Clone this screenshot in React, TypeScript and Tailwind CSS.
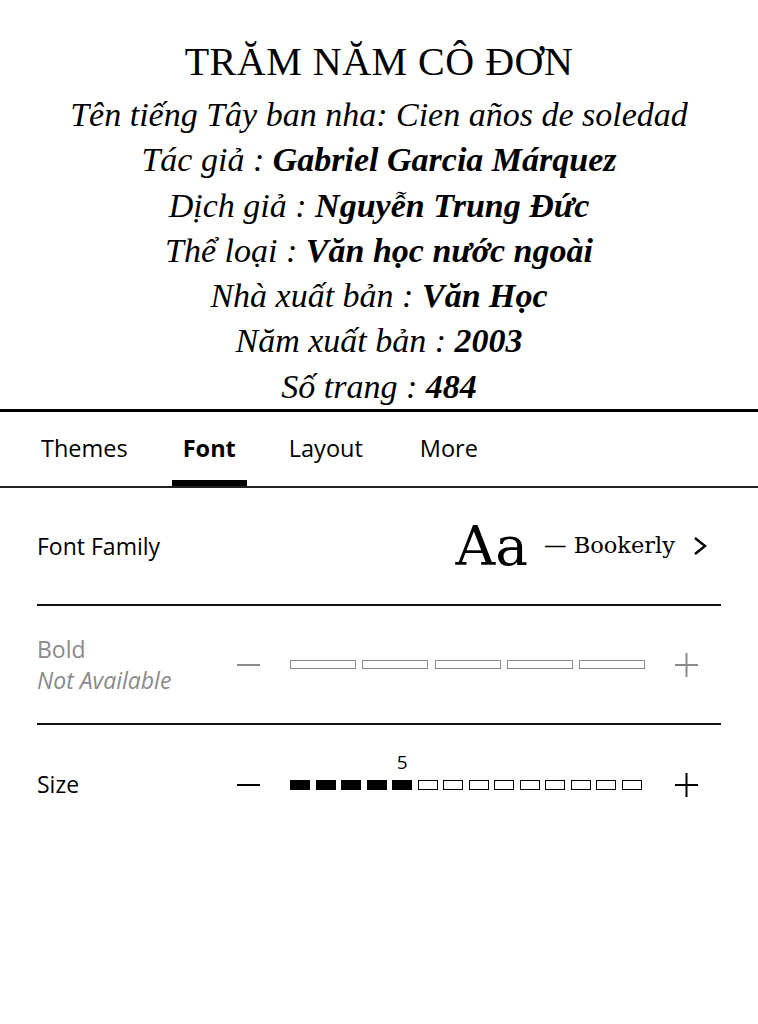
import React from "react";

const serif = "font-['Liberation_Serif',serif]";
const sans = "font-['Open_Sans',sans-serif]";

function InfoLine({ label, value }: { label: string; value: string }) {
  return (
    <div className="leading-[45.3px] text-[34px] italic">
      <span>{label}</span>
      <span className="font-bold">{value}</span>
    </div>
  );
}

function Minus({ color }: { color: string }) {
  return (
    <svg width="24" height="24" viewBox="0 0 24 24" className="shrink-0">
      <line x1="0" y1="12" x2="23" y2="12" stroke={color} strokeWidth="2" />
    </svg>
  );
}

function Plus({ color }: { color: string }) {
  return (
    <svg width="24" height="24" viewBox="0 0 24 24" className="shrink-0">
      <line x1="0" y1="12" x2="23" y2="12" stroke={color} strokeWidth="2" />
      <line x1="11.5" y1="0" x2="11.5" y2="24" stroke={color} strokeWidth="2" />
    </svg>
  );
}

export default function App() {
  const sizes = Array.from({ length: 14 }, (_, i) => i);
  return (
    <div className="w-[758px] h-[1024px] bg-white text-black overflow-hidden">
      {/* Book info header */}
      <div className={`${serif} flex flex-col items-center pt-[36px] h-[409px]`}>
        <div className="text-[40px] leading-[52px] tracking-[0.5px]">TRĂM NĂM CÔ ĐƠN</div>
        <div className="mt-[4px] flex flex-col items-center">
          <InfoLine label="Tên tiếng Tây ban nha: Cien años de soledad" value="" />
          <InfoLine label="Tác giả : " value="Gabriel Garcia Márquez" />
          <InfoLine label="Dịch giả : " value="Nguyễn Trung Đức" />
          <InfoLine label="Thể loại : " value="Văn học nước ngoài" />
          <InfoLine label="Nhà xuất bản : " value="Văn Học" />
          <InfoLine label="Năm xuất bản : " value="2003" />
          <InfoLine label="Số trang : " value="484" />
        </div>
      </div>
      <div className="h-[3px] bg-black" />

      {/* Tabs */}
      <div className={`${sans} flex items-stretch h-[76px] border-b-2 border-[#222] pl-[30px] text-[23.5px]`}>
        <div className="px-[11px] flex items-center">Themes</div>
        <div className="ml-[33px] px-[11px] flex items-center font-bold relative">
          Font
          <div className="absolute left-0 right-0 bottom-0 h-[6px] bg-black" />
        </div>
        <div className="ml-[31px] px-[11px] flex items-center">Layout</div>
        <div className="ml-[35px] px-[11px] flex items-center">More</div>
      </div>

      {/* Settings */}
      <div className={`${sans} px-[37px] text-[23px]`}>
        {/* Font Family */}
        <div className="h-[118px] flex items-center border-b-2 border-[#111]">
          <div className="flex-1">Font Family</div>
          <div className="flex items-center">
            <span className="font-['DejaVu_Serif',serif] text-[55px] leading-none">Aa</span>
            <span className="font-['DejaVu_Serif',serif] ml-[16px] text-[22.5px]">— Bookerly</span>
            <svg width="15" height="20" viewBox="0 0 15 20" className="ml-[18px] mr-[13px]">
              <polyline points="2,2 12,10 2,18" fill="none" stroke="black" strokeWidth="2.4" />
            </svg>
          </div>
        </div>

        {/* Bold */}
        <div className="h-[119px] flex items-center border-b-2 border-[#111]">
          <div className="w-[200px] flex flex-col text-[#8a8a8a] leading-[31px]">
            <span>Bold</span>
            <span className="italic">Not Available</span>
          </div>
          <Minus color="#8a8a8a" />
          <div className="ml-[29px] w-[355px] flex justify-between">
            {[0, 1, 2, 3, 4].map((i) => (
              <div key={i} className="w-[66px] h-[9px] border-[1.5px] border-[#8a8a8a]" />
            ))}
          </div>
          <div className="ml-[30px]">
            <Plus color="#8a8a8a" />
          </div>
        </div>

        {/* Size */}
        <div className="h-[119px] flex items-center">
          <div className="w-[200px]">Size</div>
          <Minus color="#000" />
          <div className="ml-[29px] w-[352px] flex justify-between">
            {sizes.map((i) => (
              <div
                key={i}
                className={
                  i < 5
                    ? "relative w-[20px] h-[10px] bg-black"
                    : "relative w-[20px] h-[10px] border-[1.5px] border-black"
                }
              >
                {i === 4 && (
                  <span className="absolute left-1/2 -translate-x-1/2 -top-[27px] text-[19px] leading-none">
                    5
                  </span>
                )}
              </div>
            ))}
          </div>
          <div className="ml-[33px]">
            <Plus color="#000" />
          </div>
        </div>
      </div>
    </div>
  );
}
